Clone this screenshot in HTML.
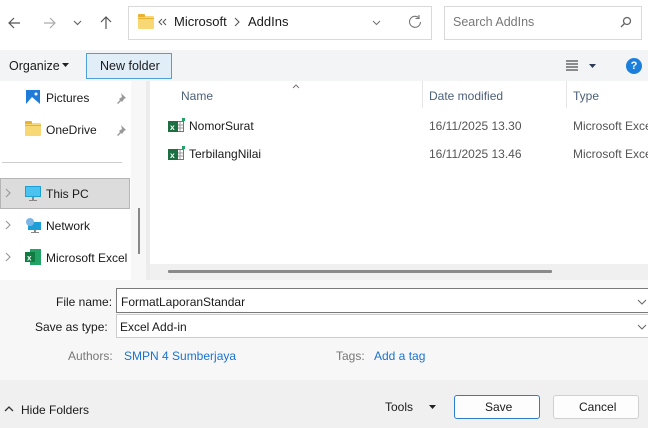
<!DOCTYPE html>
<html><head><meta charset="utf-8"><style>
*{margin:0;padding:0;box-sizing:border-box}
body{width:648px;height:428px;overflow:hidden;position:relative;background:#fff;font-family:"Liberation Sans","DejaVu Sans",sans-serif;font-size:12px;color:#1a1a1a}
.a{position:absolute}
.t{position:absolute;white-space:nowrap;line-height:16px}
.fold{position:absolute;width:16px;height:13px;background:#f8d775;border-radius:1px}
.fold:before{content:"";position:absolute;left:0;top:-2px;width:7px;height:3px;background:#e8b332;border-radius:1px 1px 0 0}
.fold:after{content:"";position:absolute;left:0;top:2px;width:16px;height:1px;background:#e8b332}
</style></head><body>
<svg class="a" style="left:4px;top:13px" width="120" height="20" viewBox="0 0 120 20" fill="none" stroke-width="1.2">
<path d="M16 10H5M10 5L5 10l5 5" stroke="#555"/>
<path d="M40 10h11M46 5l5 5-5 5" stroke="#aaa"/>
<path d="M70 8l3.5 3.5L77 8" stroke="#666"/>
<path d="M102 16V4M97 9l5-5 5 5" stroke="#555"/>
</svg>
<div class="a" style="left:128px;top:6px;width:304px;height:34px;border:1px solid #d9d9d9;background:#fff"></div>
<div class="fold" style="left:138px;top:16px"></div>
<svg class="a" style="left:158px;top:18px" width="10" height="8" fill="none" stroke="#555" stroke-width="1"><path d="M4 1L1 4l3 3M8 1L5 4l3 3"/></svg>
<div class="t" style="left:174px;top:14px;font-size:13px">Microsoft</div>
<svg class="a" style="left:234px;top:17px" width="6" height="10" fill="none" stroke="#555" stroke-width="1.1"><path d="M1 1l4 4-4 4"/></svg>
<div class="t" style="left:248px;top:14px;font-size:13px">AddIns</div>
<svg class="a" style="left:370px;top:12px" width="60" height="20" fill="none" stroke="#777" stroke-width="1.1"><path d="M3 9l3.5 3.5L10 9"/><path d="M49 6a5.5 5.5 0 1 0 1.5 4M49 3v3.5h-3.5"/></svg>
<div class="a" style="left:444px;top:6px;width:198px;height:34px;border:1px solid #d9d9d9;background:#fff"></div>
<div class="t" style="left:453px;top:14px;color:#777;font-size:12.5px">Search AddIns</div>
<svg class="a" style="left:618px;top:15px" width="16" height="16" fill="none" stroke="#666" stroke-width="1.3"><circle cx="9" cy="6" r="3.5"/><path d="M6.5 8.5L3 12"/></svg>
<div class="a" style="left:0;top:50px;width:648px;height:31px;background:#f3f4f6"></div>
<div class="t" style="left:9px;top:58px;font-size:12.5px">Organize</div>
<svg class="a" style="left:62px;top:63px" width="8" height="5"><path d="M0 0h7l-3.5 4z" fill="#222"/></svg>
<div class="a" style="left:86px;top:53px;width:86px;height:26px;background:#e1eef8;border:1px solid #4f9fd9"></div>
<div class="t" style="left:100px;top:58px;font-size:12.5px">New folder</div>
<svg class="a" style="left:565px;top:59px" width="40" height="14"><path d="M1 2h12M1 5h12M1 8h12M1 11h12" stroke="#222" stroke-width="1"/><path d="M24 5h7l-3.5 4z" fill="#2b3a55"/></svg>
<div class="a" style="left:626px;top:58px;width:16px;height:16px;border-radius:50%;background:#1c7fdb;color:#fff;font-size:11px;font-weight:bold;text-align:center;line-height:16px">?</div>
<div class="a" style="left:131px;top:81px;width:15px;height:199px;background:#f7f7f7"></div>
<div class="a" style="left:146px;top:81px;width:4px;height:199px;background:#ececec"></div>
<div class="a" style="left:138px;top:208px;width:2px;height:46px;background:#888"></div>
<svg class="a" style="left:26px;top:90px" width="14" height="14"><rect width="14" height="14" fill="#1f7bd8"/><path d="M0 14l6-7 8 7z" fill="#fff"/><circle cx="10" cy="4" r="1.5" fill="#fff"/></svg>
<div class="t" style="left:46px;top:90px">Pictures</div>
<svg class="a" style="left:115px;top:92px" width="12" height="12"><path d="M6 1l5 5-2 1-2 3-1-1-3 3-1-1 3-3-1-1 3-2z" fill="#999"/></svg>
<div class="fold" style="left:25px;top:123px"></div>
<div class="t" style="left:46px;top:122px">OneDrive</div>
<svg class="a" style="left:115px;top:124px" width="12" height="12"><path d="M6 1l5 5-2 1-2 3-1-1-3 3-1-1 3-3-1-1 3-2z" fill="#999"/></svg>
<div class="a" style="left:2px;top:162px;width:120px;height:1px;background:#ccc"></div>
<div class="a" style="left:0;top:178px;width:130px;height:31px;background:#dcdcdc;border:1px solid #b5b5b5"></div>
<svg class="a" style="left:4px;top:188px" width="8" height="76" fill="none" stroke="#999" stroke-width="1.1"><path d="M2 1l4 4-4 4M2 33l4 4-4 4M2 65l4 4-4 4"/></svg>
<svg class="a" style="left:25px;top:186px" width="16" height="16"><rect x="0" y="0" width="16" height="11" fill="#1b9fd6"/><rect x="1" y="1" width="14" height="9" fill="#4cc2ee"/><rect x="7" y="11" width="2" height="3" fill="#888"/><rect x="4" y="14" width="8" height="1" fill="#888"/></svg>
<div class="t" style="left:46px;top:186px">This PC</div>
<svg class="a" style="left:25px;top:218px" width="16" height="16"><rect x="3" y="4" width="13" height="8" fill="#1b9fd6"/><circle cx="5" cy="4" r="4" fill="#7bb6e8"/><rect x="9" y="12" width="2" height="2" fill="#888"/><rect x="6" y="14" width="8" height="1" fill="#888"/></svg>
<div class="t" style="left:46px;top:218px">Network</div>
<svg class="a" style="left:25px;top:249px" width="16" height="16"><rect x="5" y="0" width="11" height="16" fill="#21a366"/><rect x="0" y="3" width="10" height="10" fill="#107c41"/><text x="2" y="11.5" font-size="8" font-weight="bold" fill="#fff" font-family="Liberation Sans">x</text></svg>
<div class="t" style="left:46px;top:250px">Microsoft Excel</div>
<svg class="a" style="left:292px;top:84px" width="8" height="5" fill="none" stroke="#777"><path d="M1 4l3-3 3 3"/></svg>
<div class="t" style="left:181px;top:88px;color:#4c607a">Name</div>
<div class="a" style="left:422px;top:81px;width:1px;height:27px;background:#e5e5e5"></div>
<div class="t" style="left:429px;top:88px;color:#4c607a">Date modified</div>
<div class="a" style="left:566px;top:81px;width:1px;height:27px;background:#e5e5e5"></div>
<div class="t" style="left:573px;top:88px;color:#4c607a">Type</div>
<svg class="a" style="left:168px;top:118px" width="17" height="15"><rect x="8.5" y="3.5" width="7" height="10" fill="#fff" stroke="#777"/><path d="M9 7h6M9 10h6M12 4v9" stroke="#999"/><rect x="14" y="0" width="3" height="3" fill="#21a366"/><rect x="0" y="3" width="10" height="11" fill="#1d6f42"/><text x="2" y="12" font-size="8.5" font-weight="bold" fill="#fff" font-family="Liberation Sans">x</text></svg>
<div class="t" style="left:189px;top:118px">NomorSurat</div>
<div class="t" style="left:429px;top:118px;color:#555">16/11/2025 13.30</div>
<div class="t" style="left:573px;top:118px;color:#555">Microsoft Excel</div>
<svg class="a" style="left:168px;top:146px" width="17" height="15"><rect x="8.5" y="3.5" width="7" height="10" fill="#fff" stroke="#777"/><path d="M9 7h6M9 10h6M12 4v9" stroke="#999"/><rect x="14" y="0" width="3" height="3" fill="#21a366"/><rect x="0" y="3" width="10" height="11" fill="#1d6f42"/><text x="2" y="12" font-size="8.5" font-weight="bold" fill="#fff" font-family="Liberation Sans">x</text></svg>
<div class="t" style="left:189px;top:146px">TerbilangNilai</div>
<div class="t" style="left:429px;top:146px;color:#555">16/11/2025 13.46</div>
<div class="t" style="left:573px;top:146px;color:#555">Microsoft Excel</div>
<div class="a" style="left:150px;top:264px;width:498px;height:16px;background:#f0f0f0"></div>
<div class="a" style="left:168px;top:270px;width:384px;height:3px;background:#8a8a8a;border-radius:1px"></div>
<div class="a" style="left:0;top:280px;width:648px;height:100px;background:#f7f7f7"></div>
<div class="t" style="left:56px;top:294px">File name:</div>
<div class="a" style="left:116px;top:288px;width:540px;height:25px;background:#fff;border:1px solid #7a7a7a"></div>
<div class="t" style="left:121px;top:294px">FormatLaporanStandar</div>
<div class="t" style="left:35px;top:319px">Save as type:</div>
<div class="a" style="left:116px;top:314px;width:540px;height:24px;background:#fff;border:1px solid #ccc"></div>
<div class="t" style="left:120px;top:319px">Excel Add-in</div>
<svg class="a" style="left:636px;top:297px" width="12" height="40" fill="none" stroke="#666"><path d="M2 3l4 4 4-4M2 28l4 4 4-4"/></svg>
<div class="t" style="left:68px;top:348px;color:#777">Authors:</div>
<div class="t" style="left:124px;top:348px;color:#1a73d0">SMPN 4 Sumberjaya</div>
<div class="t" style="left:336px;top:348px;color:#777">Tags:</div>
<div class="t" style="left:374px;top:348px;color:#1a73d0">Add a tag</div>
<div class="a" style="left:0;top:380px;width:648px;height:48px;background:#f0f0f0"></div>
<svg class="a" style="left:4px;top:405px" width="10" height="8" fill="none" stroke="#333" stroke-width="1.3"><path d="M1 6l4-4 4 4"/></svg>
<div class="t" style="left:21px;top:402px">Hide Folders</div>
<div class="t" style="left:385px;top:399px">Tools</div>
<svg class="a" style="left:429px;top:405px" width="8" height="5"><path d="M0 0h7l-3.5 4z" fill="#222"/></svg>
<div class="a" style="left:454px;top:395px;width:86px;height:24px;background:#fdfdfd;border:1px solid #2e7bd1;border-radius:3px"></div>
<div class="t" style="left:485px;top:399px">Save</div>
<div class="a" style="left:553px;top:395px;width:86px;height:24px;background:#fdfdfd;border:1px solid #d0d0d0;border-radius:3px"></div>
<div class="t" style="left:579px;top:399px">Cancel</div>
</body></html>
